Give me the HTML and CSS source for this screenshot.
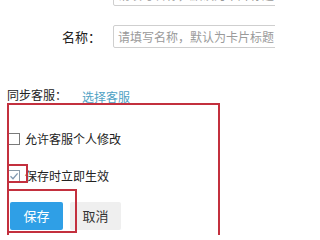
FILE: index.html
```html
<!DOCTYPE html>
<html lang="zh">
<head>
<meta charset="utf-8">
<link rel="stylesheet" href="styles.css">
</head>
<body>
<div class="page">
  <div class="row row-top">
    <span class="label"></span>
    <span class="input"><span class="ph">请填写名称，默认为卡片标题</span></span>
  </div>
  <div class="row row-name">
    <span class="label">名称：</span>
    <span class="input"><span class="ph">请填写名称，默认为卡片标题</span></span>
  </div>
  <div class="sync">
    <span class="sync-label">同步客服：</span>
    <a class="link">选择客服</a>
  </div>
  <div class="check-row first">
    <span class="box"></span>
    <span class="check-text">允许客服个人修改</span>
  </div>
  <div class="check-row second">
    <span class="box checked"><svg viewBox="0 0 12 12" width="12" height="12"><path d="M2.5 6.2 L5 8.7 L9.6 3.4" fill="none" stroke="#7f98b0" stroke-width="1.3"/></svg></span>
    <span class="check-text">保存时立即生效</span>
  </div>
  <div class="buttons">
    <span class="btn save">保存</span>
    <span class="btn cancel">取消</span>
  </div>
  <div class="mark mark-big"></div>
  <div class="mark mark-check"></div>
  <div class="mark mark-btn"></div>
</div>
</body>
</html>
```
FILE: styles.css
```css
html, body {
  margin: 0;
  padding: 0;
  background: #fff;
  overflow: hidden;
}
.page {
  position: relative;
  display: flow-root;
  width: 275px;
  height: 235px;
  overflow: hidden;
  font-family: "Noto Sans CJK SC", "Noto Sans", sans-serif;
  font-size: 12px;
  color: #333;
}
.row {
  display: flex;
  align-items: center;
  height: 23px;
}
.row-top {
  margin-top: -17px;
}
.row-name {
  margin-top: 19px;
}
.label {
  width: 101px;
  flex: none;
  text-align: right;
  padding-right: 12px;
  font-size: 13px;
  color: #222;
  line-height: 23px;
}
.input {
  flex: none;
  width: 200px;
  height: 23px;
  box-sizing: border-box;
  border: 1px solid #cfcfcf;
  border-radius: 2px;
  padding-left: 4px;
  display: flex;
  align-items: center;
  white-space: nowrap;
  overflow: hidden;
}
.ph {
  color: #9a9a9a;
  font-size: 12px;
}
.sync {
  display: flex;
  align-items: flex-start;
  margin-top: 39px;
  padding-left: 7px;
  height: 16px;
  line-height: 16px;
  font-size: 12px;
  color: #222;
}
.link {
  margin-left: 15px;
  margin-top: 2px;
  color: #4fa2c4;
}
.check-row {
  display: flex;
  align-items: center;
  padding-left: 8px;
  height: 16px;
  line-height: 16px;
  color: #222;
}
.check-row.first {
  margin-top: 28px;
}
.check-row.second {
  margin-top: 21px;
}
.box {
  width: 12px;
  height: 12px;
  box-sizing: border-box;
  border: 1px solid #7a7a7a;
  background: #fff;
  flex: none;
  display: flex;
  align-items: center;
  justify-content: center;
}
.box.checked {
  border-color: #8a9aa8;
}
.box svg {
  display: block;
  flex: none;
}
.check-text {
  margin-left: 5px;
}
.buttons {
  display: flex;
  gap: 7px;
  margin-top: 18px;
  padding-left: 10px;
}
.btn {
  height: 28px;
  line-height: 28px;
  text-align: center;
  border-radius: 2px;
  font-size: 13px;
}
.save {
  width: 53px;
  background: #2f9fe6;
  color: #fff;
}
.cancel {
  width: 51px;
  background: #efefef;
  color: #333;
}
.mark {
  position: absolute;
  box-sizing: border-box;
  border: 2px solid #c3303e;
}
.mark-big {
  left: 7px;
  top: 103px;
  width: 213px;
  height: 150px;
}
.mark-check {
  left: 7px;
  top: 164px;
  width: 21px;
  height: 19px;
}
.mark-btn {
  left: 7px;
  top: 189px;
  width: 70px;
  height: 44px;
}
```
